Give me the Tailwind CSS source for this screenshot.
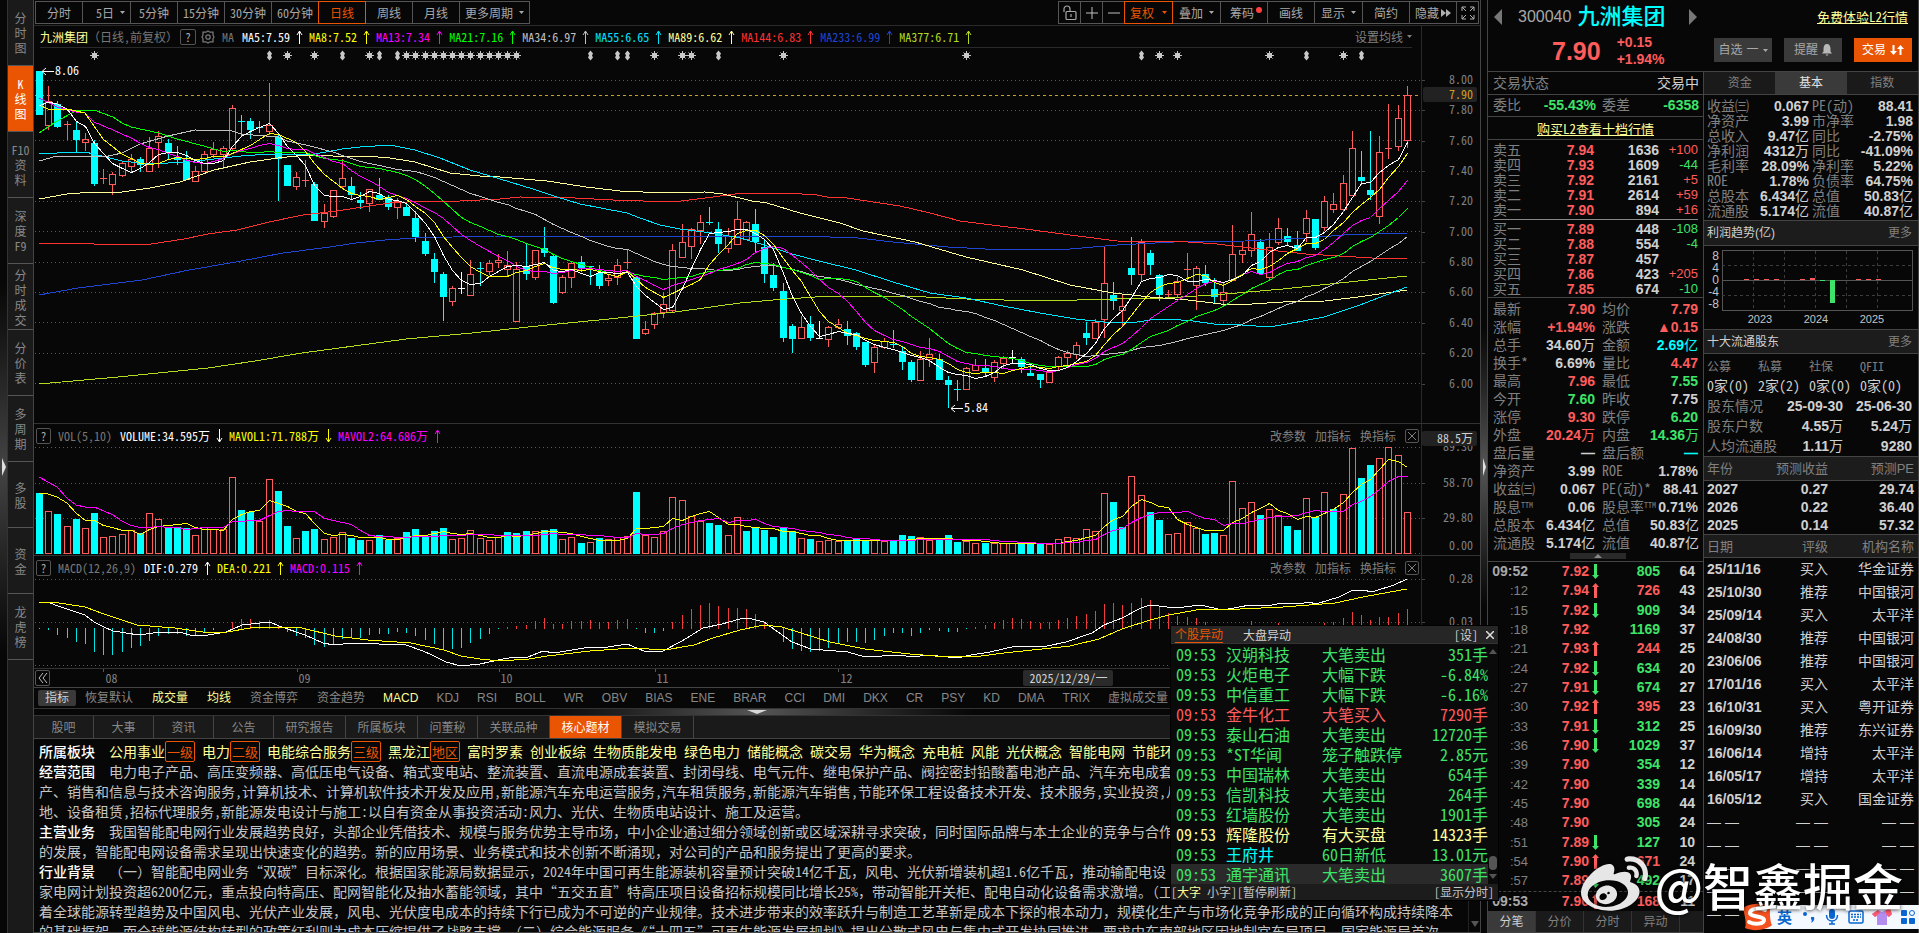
<!DOCTYPE html>
<html lang="zh-CN">
<head>
    <meta charset="UTF-8">
    <meta name="viewport" content="width=device-width, initial-scale=1.0">
    <title>九洲集团 300040 日线</title>
    <script src="https://cdn.jsdelivr.net/npm/@tailwindcss/browser@4"></script>
</head>
<body class="relative flex h-screen overflow-hidden bg-[#070707] text-xs leading-4 text-[#a8a8a8] font-['Noto_Sans_CJK_SC',sans-serif] [font-feature-settings:'hwid']">

    <!-- 左侧导航 -->
    <div class="flex w-2 shrink-0 flex-col justify-center border-r border-[#333] bg-linear-to-b from-[#070707] from-30% via-[#444] to-[#070707] to-70%">
        <svg class="h-5 w-2" viewBox="0 0 8 20"><path d="M2 1l4 9-4 9z" fill="#e0e0e0"/></svg>
    </div>
    <nav id="sideNav" class="flex w-[26px] shrink-0 flex-col border-r border-[#444] bg-[#1a1a1a] text-[#888]"></nav>

    <!-- 图表区 -->
    <main class="flex min-w-0 flex-1 flex-col">
        <div class="flex h-[26px] shrink-0 justify-between border-b border-[#2a2a2a] pt-px pl-0.5">
            <div id="periods" class="flex"></div>
            <div class="flex pr-px">
                <button aria-label="锁定" class="-ml-px flex h-[23px] w-[23px] items-center justify-center border border-[#555]">
                    <svg class="h-4 w-4" viewBox="0 0 16 16" fill="none" stroke="#a8a8a8" stroke-width="1.2"><rect x="4" y="6.5" width="10" height="8" rx="1"/><path d="M2 7V4a3 3 0 0 1 6 0v2.500M9 9v3"/></svg>
                </button>
                <button aria-label="放大" class="-ml-px flex h-[23px] w-[23px] items-center justify-center border border-[#555]">
                    <svg class="h-3 w-3" viewBox="0 0 12 12" stroke="#c0c0c0"><path d="M6 0v12M0 6h12"/></svg>
                </button>
                <button aria-label="缩小" class="-ml-px flex h-[23px] w-[23px] items-center justify-center border border-[#555]">
                    <svg class="h-3 w-3" viewBox="0 0 12 12" stroke="#c0c0c0"><path d="M0 6h12"/></svg>
                </button>
                <button class="z-10 -ml-px flex h-[23px] w-[49px] items-center justify-center gap-2 border border-[#ea5504] text-[#ea5504]">复权<svg class="h-[3px] w-[5px]" viewBox="0 0 5 3" fill="currentColor"><path d="M0 0h5L2.500 3z"/></svg></button>
                <button class="-ml-px flex h-[23px] w-[49px] items-center justify-center gap-1.5 border border-[#555]">叠加<svg class="h-[3px] w-[5px]" viewBox="0 0 5 3" fill="currentColor"><path d="M0 0h5L2.500 3z"/></svg></button>
                <button class="-ml-px flex h-[23px] w-[48px] items-center justify-center border border-[#555] pl-1">筹码<span class="mb-1.5 ml-0.5 h-1.5 w-1.5 rounded-full bg-[#ff4040]"></span></button>
                <button class="-ml-px h-[23px] w-[48px] border border-[#555]">画线</button>
                <button class="-ml-px flex h-[23px] w-[49px] items-center justify-center gap-1.5 border border-[#555]">显示<svg class="h-[3px] w-[5px]" viewBox="0 0 5 3" fill="currentColor"><path d="M0 0h5L2.500 3z"/></svg></button>
                <button class="-ml-px h-[23px] w-[48px] border border-[#555]">简约</button>
                <button class="-ml-px flex h-[23px] w-[48px] items-center justify-center gap-0.5 border border-[#555]">隐藏<svg class="h-2 w-2.5" viewBox="0 0 10 8" fill="#b0b0b0"><path d="M0 0l5 4-5 4zM5 0l5 4-5 4z"/></svg></button>
                <button aria-label="全屏" class="-ml-px flex h-[23px] w-[23px] items-center justify-center border border-[#555]">
                    <svg class="h-3.5 w-3.5" viewBox="0 0 14 14" fill="none" stroke="#b0b0b0"><path d="M1 5V1h4M1 1l4 4M9 1h4v4M13 1L9 5M1 9v4h4M1 13l4-4M13 9v4H9M13 13L9 9"/></svg>
                </button>
            </div>
        </div>

        <!-- K线 -->
        <section class="flex border-b border-[#333]">
            <div class="min-w-0 flex-1">
                <div class="mr-[9px] ml-1.5 flex h-[22px] items-center justify-between border-b border-[#2a2a2a] whitespace-nowrap">
                    <div class="flex items-center">
                        <h2 class="text-[#ffff99]">九洲集团</h2>
                        <span class="text-[#777] [font-feature-settings:normal]">（日线<span class="[font-feature-settings:'hwid']">,</span>前复权）</span>
                        <button class="ml-0.5 h-4 w-4 rounded-xs border border-[#555] leading-3">?</button>
                        <svg class="ml-[5px] h-3.5 w-3.5" viewBox="0 0 14 14" fill="none" stroke="#777" stroke-width="1.3"><path d="M7 1l2 1.200h3v3L13 7l-1 1.800v3H9L7 13l-2-1.200H2v-3L1 7l1-1.800v-3h3z"/><circle cx="7" cy="7" r="2.200"/></svg>
                        <span class="mr-2 ml-[7px] text-[#777]">MA</span>
                        <div id="maLegend" class="flex items-center"></div>
                    </div>
                    <button class="flex items-center gap-1 text-[#808080]">设置均线<svg class="h-[3px] w-[5px]" viewBox="0 0 5 3" fill="currentColor"><path d="M0 0h5L2.500 3z"/></svg></button>
                </div>
                <svg id="kChart" class="block h-[375px] w-full" viewBox="34 48 1387 375" preserveAspectRatio="none"></svg>
            </div>
            <svg id="kAxis" class="block h-[397px] w-[59px] shrink-0 border-l border-[#2a2a2a] text-xs" viewBox="1422 26 58 397"></svg>
        </section>

        <!-- 成交量 -->
        <section class="flex border-b border-[#333]">
            <div class="min-w-0 flex-1">
                <div class="flex h-[23px] items-center justify-between pr-0.5 pl-0.5 whitespace-nowrap">
                    <div class="flex items-center">
                        <button class="mr-[7px] h-4 w-[15px] rounded-xs border border-[#555] leading-3">?</button>
                        <span class="mr-2 text-[#777]">VOL(5,10)</span>
                        <div id="volLegend" class="flex items-center"></div>
                    </div>
                    <div class="flex items-center gap-[9px] text-[#808080]">
                        <button>改参数</button><button>加指标</button><button>换指标</button>
                        <button aria-label="关闭" class="flex h-3.5 w-3.5 items-center justify-center rounded-xs border border-[#555]"><svg class="h-2 w-2" viewBox="0 0 8 8" stroke="#808080"><path d="M0 0l8 8M8 0L0 8"/></svg></button>
                    </div>
                </div>
                <svg id="vChart" class="block h-[108px] w-full" viewBox="34 447 1387 108" preserveAspectRatio="none"></svg>
            </div>
            <svg id="vAxis" class="block h-[131px] w-[59px] shrink-0 border-l border-[#2a2a2a] text-xs" viewBox="1422 424 58 131"></svg>
        </section>

        <!-- MACD -->
        <section class="flex border-b border-[#333]">
            <div class="min-w-0 flex-1">
                <div class="flex h-[23px] items-center justify-between pr-0.5 pl-0.5 whitespace-nowrap">
                    <div class="flex items-center">
                        <button class="mr-[7px] h-4 w-[15px] rounded-xs border border-[#555] leading-3">?</button>
                        <span class="mr-2 text-[#777]">MACD(12,26,9)</span>
                        <div id="macdLegend" class="flex items-center"></div>
                    </div>
                    <div class="flex items-center gap-[9px] text-[#808080]">
                        <button>改参数</button><button>加指标</button><button>换指标</button>
                        <button aria-label="关闭" class="flex h-3.5 w-3.5 items-center justify-center rounded-xs border border-[#555]"><svg class="h-2 w-2" viewBox="0 0 8 8" stroke="#808080"><path d="M0 0l8 8M8 0L0 8"/></svg></button>
                    </div>
                </div>
                <svg id="mChart" class="block h-[89px] w-full" viewBox="34 579 1387 89" preserveAspectRatio="none"></svg>
            </div>
            <svg id="mAxis" class="block h-[112px] w-[59px] shrink-0 border-l border-[#2a2a2a] text-xs" viewBox="1422 556 58 112"></svg>
        </section>

        <!-- 日期轴 -->
        <div class="flex h-[19px] shrink-0 border-b border-[#444]">
            <div id="dates" class="relative flex-1 text-[#808080]">
                <button aria-label="向前" class="mt-px ml-px flex h-4 w-[15px] items-center justify-center rounded-xs border border-[#555]">
                    <svg class="h-2.5 w-2.5" viewBox="0 0 10 10" fill="none" stroke="#c0c0c0"><path d="M5 0L1 5l4 5M9 0L5 5l4 5"/></svg>
                </button>
            </div>
            <div class="w-[59px]"></div>
        </div>

        <!-- 指标选择 -->
        <div class="flex h-[21px] shrink-0 items-center gap-[18px] overflow-hidden border-b border-[#333] pl-1 whitespace-nowrap text-[#888] font-['Liberation_Sans','Noto_Sans_CJK_SC',sans-serif]">
            <div id="groups" class="flex items-center gap-[19px]"></div>
            <div id="indicators" class="flex items-center gap-[18px]"></div>
        </div>
        <div class="flex h-[7px] shrink-0 items-center justify-center border-b border-[#333] bg-linear-to-r from-[#070707] from-35% via-[#555] via-50% to-[#070707] to-65%">
            <svg class="h-1 w-5" viewBox="0 0 20 4"><path d="M0 0h20l-10 4z" fill="#d8d8d8"/></svg>
        </div>

        <!-- 资料页签 -->
        <div id="infoTabs" class="flex h-[23px] shrink-0 border-b border-[#444] bg-[#1a1a1a] text-[#888]"></div>
        <div class="flex min-h-0 flex-1 overflow-hidden border-b border-[#444]">
            <article id="info" class="min-w-0 flex-1 overflow-hidden pt-0.5 pl-[5px] text-sm leading-5 whitespace-nowrap text-[#c4c4c4] [font-feature-settings:normal]"></article>
            <div class="flex w-3 flex-col items-center justify-end border-l border-[#222]">
                <svg class="mb-1 h-2 w-2" viewBox="0 0 8 8"><path d="M0 1h8L4 7z" fill="#555"/></svg>
            </div>
        </div>
    </main>

    <!-- 分隔条 -->
    <div class="flex w-[7px] shrink-0 flex-col justify-center border-l border-[#444] bg-linear-to-b from-[#070707] from-35% via-[#555] to-[#070707] to-65%">
        <svg class="h-5 w-[7px]" viewBox="0 0 7 20"><path d="M2 1l3 9-3 9z" fill="#e0e0e0"/></svg>
    </div>

    <!-- 右侧行情 -->
    <aside class="flex w-[432px] shrink-0 flex-col border-x border-[#444] font-['Liberation_Sans','Noto_Sans_CJK_SC',sans-serif]">
        <header class="flex h-[72px] shrink-0 justify-between border-b border-[#444] pr-1.5">
            <div>
                <div class="flex h-[34px] items-center pl-1.5">
                    <button aria-label="上一只" class="mr-4"><svg class="h-4 w-2" viewBox="0 0 8 16"><path d="M8 0v16L0 8z" fill="#777"/></svg></button>
                    <span class="text-base">300040</span>
                    <h1 class="ml-1.5 text-[22px] leading-7 font-medium text-[#00ffff]">九洲集团</h1>
                    <button aria-label="下一只" class="ml-6"><svg class="h-4 w-2" viewBox="0 0 8 16"><path d="M0 0v16l8-8z" fill="#777"/></svg></button>
                </div>
                <div class="flex items-center pl-16 font-bold text-[#ff5c5c]">
                    <span class="text-[25px] leading-7">7.90</span>
                    <div class="ml-4 text-sm leading-[17px]">+0.15<br>+1.94%</div>
                </div>
            </div>
            <div class="flex flex-col items-end">
                <a href="#" class="mt-2 mr-1 text-[13px] leading-[18px] text-[#ffff99] underline font-['Noto_Sans_CJK_SC',sans-serif]">免费体验L2行情</a>
                <div class="mt-3 flex gap-3 text-xs">
                    <button class="flex h-6 w-[58px] items-center justify-center gap-1 bg-[#3a3a3a]">自选<span>一</span><svg class="h-[3px] w-[5px]" viewBox="0 0 5 3" fill="currentColor"><path d="M0 0h5L2.500 3z"/></svg></button>
                    <button class="flex h-6 w-[58px] items-center justify-center gap-1 bg-[#3a3a3a]">提醒<svg class="h-3 w-2.5" viewBox="0 0 10 12" fill="#b8b8b8"><path d="M5 0c2.500 0 3.500 2 3.500 5v2.500L10 9.500H0l1.500-2V5C1.500 2 2.500 0 5 0zM3.500 10.500h3L5 12z"/></svg></button>
                    <button class="flex h-6 w-[58px] items-center justify-center gap-1 bg-[#ea5504] text-white">交易<svg class="h-3 w-3.5" viewBox="0 0 14 12" fill="#fff"><path d="M2.500 1h2v6H7l-3.500 4L0 7h2.500zM9.500 11h2V5H14l-3.500-4L7 5h2.500z"/></svg></button>
                </div>
            </div>
        </header>

        <div class="flex min-h-0 flex-1">
            <!-- 五档 / 明细 -->
            <div class="flex w-[216px] shrink-0 flex-col border-r border-[#444] text-sm leading-[15px] text-[#808080]">
                <div class="flex h-[23px] shrink-0 items-center justify-between border-b border-[#444] pr-1 pl-[5px]"><span>交易状态</span><span class="text-[#d0d0d0]">交易中</span></div>
                <div class="flex h-[22px] shrink-0 items-center border-b border-[#444] pr-1 pl-[5px]">
                    <span class="w-9">委比</span><span class="w-[67px] text-right font-bold text-[#3ee468]">-55.43%</span>
                    <span class="ml-1.5">委差</span><span class="flex-1 text-right font-bold text-[#3ee468]">-6358</span>
                </div>
                <a href="#" class="flex h-[23px] shrink-0 items-center justify-center border-b border-[#444] text-[13px] text-[#ffff99] underline font-['Noto_Sans_CJK_SC',sans-serif]">购买L2查看十档行情</a>
                <div class="shrink-0 border-b border-[#444] pt-0.5 pb-px pl-[5px] leading-3">
                    <table class="w-[205px]"><tbody id="asks"></tbody></table>
                    <hr class="mt-0.5 mb-px w-[205px] border-[#888]">
                    <table class="w-[205px]"><tbody id="bids"></tbody></table>
                </div>
                <div class="shrink-0 border-b border-[#444] pt-0.5 pb-0.5 pl-[5px]">
                    <table class="w-[205px] table-fixed whitespace-nowrap"><tbody id="quote"></tbody></table>
                    <button aria-label="收起" class="mx-auto mt-px flex h-1.5 w-14 items-center justify-center bg-[#2a2a2a]"><svg class="h-1 w-2" viewBox="0 0 8 4"><path d="M0 4l4-4 4 4z" fill="#888"/></svg></button>
                </div>
                <div id="ticks" class="flex min-h-0 flex-1 flex-col"></div>
                <div class="flex h-[22px] shrink-0 border-b border-[#444] bg-[#1a1a1a] text-xs">
                    <button class="w-12 border-r border-[#333] bg-[#3a3a3a] text-[#d0d0d0]">分笔</button>
                    <button class="w-12 border-r border-[#333]">分价</button>
                    <button class="w-12 border-r border-[#333]">分时</button>
                    <button class="w-12 border-r border-[#333]">异动</button>
                </div>
            </div>

            <!-- 基本资料 -->
            <div class="flex min-w-0 flex-1 flex-col text-sm leading-[15px] text-[#808080]">
                <div class="flex h-[23px] shrink-0 border-b border-[#444] bg-[#1a1a1a] text-xs">
                    <button class="flex-1">资金</button>
                    <button class="flex-1 bg-[#3a3a3a] text-[#e0e0e0]">基本</button>
                    <button class="flex-1">指数</button>
                </div>
                <div class="shrink-0 border-b border-[#444] pt-[3px] pb-0.5 pl-[3px] leading-3">
                    <table class="w-[206px] table-fixed whitespace-nowrap"><tbody id="basics"></tbody></table>
                </div>
                <div class="flex h-[25px] shrink-0 items-center justify-between border-b border-[#444] bg-[#1c1c1c] px-[3px] pr-1.5 text-xs"><h2 class="text-[#d0d0d0]">利润趋势(亿)</h2><a href="#">更多</a></div>
                <svg id="profit" class="block h-[83px] w-full shrink-0 text-xs" viewBox="1704 246 214 83"></svg>
                <div class="flex h-[25px] shrink-0 items-center justify-between border-y border-[#444] bg-[#1c1c1c] px-[3px] pr-1.5 text-xs"><h2 class="text-[#d0d0d0]">十大流通股东</h2><a href="#">更多</a></div>
                <div class="shrink-0 border-b border-[#444] pt-0.5 pl-[3px] font-['Noto_Sans_CJK_SC',sans-serif]">
                    <div class="grid h-5 grid-cols-[51px_51px_51px_51px] text-xs leading-5"><span>公募</span><span>私募</span><span>社保</span><span>QFII</span></div>
                    <div class="grid h-5 grid-cols-[51px_51px_51px_51px] leading-[18px] text-[#d0d0d0]"><span>0家(0)</span><span>2家(2)</span><span>0家(0)</span><span>0家(0)</span></div>
                    <table class="w-[205px] leading-4 font-['Liberation_Sans','Noto_Sans_CJK_SC',sans-serif]"><tbody id="holders"></tbody></table>
                </div>
                <table class="w-full table-fixed">
                    <thead class="border-b border-[#444] bg-[#1c1c1c] text-[13px]"><tr class="h-[23px]"><th class="w-[54px] pl-[3px] text-left font-normal">年份</th><th class="text-right font-normal">预测收益</th><th class="w-[90px] pr-1 text-right font-normal">预测PE</th></tr></thead>
                    <tbody id="forecast" class="font-bold text-[#d0d0d0]"></tbody>
                </table>
                <table class="w-full table-fixed">
                    <thead class="border-y border-[#444] bg-[#1c1c1c] text-[13px]"><tr class="h-[23px]"><th class="w-[70px] pl-[3px] text-left font-normal">日期</th><th class="text-right font-normal">评级</th><th class="w-[90px] pr-1 text-right font-normal">机构名称</th></tr></thead>
                    <tbody id="ratings" class="text-[#d0d0d0]"></tbody>
                </table>
            </div>
        </div>
    </aside>

    <!-- 异动浮窗 -->
    <div class="absolute right-[420px] bottom-8 z-20 w-[329px] border border-black bg-[#0a0a0a]">
        <div class="flex h-[18px] items-center border-b border-[#333] bg-[#262626] px-1 text-[#d0d0d0]">
            <button class="border-b border-[#ea5504] text-[#ea5504]">个股异动</button>
            <button class="ml-5">大盘异动</button>
            <button class="ml-auto">[设]</button>
            <button aria-label="关闭" class="ml-2"><svg class="h-2 w-2" viewBox="0 0 8 8" stroke="#e0e0e0" stroke-width="1.500"><path d="M0 0l8 8M8 0L0 8"/></svg></button>
        </div>
        <div class="flex">
            <table class="flex-1 text-base leading-5 whitespace-nowrap"><tbody id="alerts"></tbody></table>
            <div class="flex w-2.5 flex-col items-center justify-between py-1">
                <svg class="h-1.5 w-2" viewBox="0 0 8 6"><path d="M0 6l4-5 4 5z" fill="#555"/></svg>
                <div class="mt-auto mb-1 h-3.5 w-2 rounded-full bg-[#555]"></div>
                <svg class="h-1.5 w-2" viewBox="0 0 8 6"><path d="M0 0l4 5 4-5z" fill="#555"/></svg>
            </div>
        </div>
        <div class="flex h-4 items-center justify-between bg-[#1c1c1c] text-[#c4c4c4]">
            <div><button>[<span class="text-[#ffff99]">大字</span></button> <button>小字]</button><button>[暂停刷新]</button></div>
            <button class="mr-1">[显示分时]</button>
        </div>
    </div>

    <!-- 输入法 -->
    <div class="absolute right-0 bottom-1 z-20 flex h-6 w-[166px] items-center justify-between rounded-l-sm bg-[#f4f9ff] pr-1 pl-6">
        <svg class="absolute -left-3 h-7 w-8" viewBox="0 0 32 28"><path d="M2 5C8 0 22 0 30 2c-2 3-1 18 1 20-6 5-18 7-27 3C6 20 3 10 2 5z" fill="#f4511e"/><path d="M24 7C17 4 9 6 9 10s14 3 14 7-9 5-15 2" fill="none" stroke="#fff" stroke-width="4" stroke-linecap="round"/></svg>
        <span class="text-[15px] leading-5 font-bold text-[#0a66d0]">英</span>
        <svg class="h-4 w-4" viewBox="0 0 16 16" fill="#0a66d0"><circle cx="4" cy="5" r="2"/><path d="M10 8h3c1 3-1 5-3 6 1-2 1-3 0-4z"/></svg>
        <svg class="h-4 w-3.5" viewBox="0 0 14 16"><rect x="4" y="0" width="6" height="10" rx="3" fill="#0a66d0"/><path d="M1.500 6c0 8 11 8 11 0M7 12v3M4 15h6" fill="none" stroke="#0a66d0" stroke-width="1.500"/></svg>
        <svg class="h-3.5 w-4" viewBox="0 0 16 14"><rect x="1" y="1" width="14" height="12" rx="1.500" fill="none" stroke="#0a66d0" stroke-width="1.500"/><path d="M3 4.500h10M3 7h10M5 10h6" stroke="#0a66d0" stroke-width="1.500" stroke-dasharray="2 1"/></svg>
        <svg class="h-4 w-5" viewBox="0 0 20 16"><path d="M0 5l6-4 4 2 4-2 6 4-3 3-2-1v9H5V7L3 8z" fill="#b38cf0"/><path d="M0 5l6-4 2 3-5 4zM14 1l4-2 2 6-3 3-3-3z" fill="#ff5a70"/></svg>
        <svg class="h-3.5 w-3.5" viewBox="0 0 14 14" fill="#0a66d0"><rect width="6" height="6" rx="1"/><rect y="8" width="6" height="6" rx="1"/><rect x="8" y="8" width="6" height="6" rx="1"/><circle cx="11" cy="3" r="2.500" fill="none" stroke="#0a66d0"/></svg>
    </div>

    <!-- 水印 -->
    <div class="absolute right-4 bottom-4 z-30 flex items-center gap-1.5 text-[50px] leading-[60px] font-medium whitespace-nowrap text-white drop-shadow-[0_0_2px_#000] [font-feature-settings:normal]">
        <svg class="h-[67px] w-[67px] opacity-90" viewBox="0 0 24 24" fill="#fff"><path d="M10.098 20.323c-3.977.391-7.414-1.406-7.672-4.020-.259-2.609 2.759-5.047 6.740-5.441 3.979-.394 7.413 1.404 7.671 4.018.259 2.600-2.759 5.049-6.737 5.439l-.002.004zM9.050 17.219c-.384.616-1.208.884-1.829.602-.612-.279-.793-.991-.406-1.593.379-.595 1.176-.861 1.793-.601.622.263.820.972.442 1.592zm1.270-1.627c-.141.237-.449.353-.689.253-.236-.090-.313-.361-.177-.586.138-.227.436-.346.672-.240.239.090.315.360.180.601l.014-.028zm.176-2.719c-1.893-.493-4.033.450-4.857 2.118-.836 1.704-.026 3.591 1.886 4.210 1.983.640 4.318-.341 5.132-2.179.8-1.793-.201-3.642-2.161-4.149zm7.563-1.224c-.346-.105-.570-.180-.405-.615.375-.977.420-1.804 0-2.404-.781-1.112-2.915-1.053-5.364-.030 0 0-.766.331-.571-.271.376-1.217.315-2.224-.270-2.809-1.338-1.337-4.869.045-7.888 3.080C1.309 10.870 0 13.273 0 15.348c0 3.981 5.099 6.395 10.086 6.395 6.536 0 10.888-3.801 10.888-6.820 0-1.822-1.547-2.854-2.915-3.284v.010zm1.908-5.092c-.766-.856-1.908-1.187-2.960-.962-.436.090-.706.511-.616.932.090.420.511.691.932.602.511-.105 1.067.044 1.442.465.376.421.466.977.316 1.473-.136.406.089.856.510.992.405.119.857-.105.992-.512.330-1.021.120-2.178-.646-3.035l.030.045zm2.418-2.195c-1.576-1.757-3.905-2.419-6.054-1.968-.496.104-.812.587-.706 1.081.104.496.586.813 1.082.707 1.532-.331 3.185.150 4.296 1.383 1.112 1.246 1.429 2.943.947 4.416-.165.480.106 1.007.586 1.157.479.165.991-.104 1.157-.586.675-2.088.241-4.478-1.338-6.235l.030.045z"/></svg>
        <span>@智鑫掘金</span>
    </div>

    <script>
        const $ = id => document.getElementById(id);
        const RED = "#ff5c5c", CYAN = "#00ffff";

        // ---------- 导航 ----------
        $("sideNav").innerHTML = ["分,时,图", "K,线,图", "F10,资,料", "深,度,F9", "分,时,成,交", "分,价,表", "多,周,期", "多,股", "资,金", "龙,虎,榜"].map((t, i) =>
            `<button class="flex h-[66px] shrink-0 flex-col items-center justify-center border-b border-[#555] leading-[15px] ${i === 1 ? "bg-[#ea5504] text-white" : ""}">${t.split(",").map(c => `<span>${c}</span>`).join("")}</button>`).join("");

        const arrow = '<svg class="h-[3px] w-[5px]" viewBox="0 0 5 3" fill="currentColor"><path d="M0 0h5L2.500 3z"/></svg>';
        $("periods").innerHTML = ["分时", "5日" + arrow, "5分钟", "15分钟", "30分钟", "60分钟", "日线", "周线", "月线"].map((t, i) =>
            `<button class="-ml-px flex h-[23px] items-center justify-center gap-1.5 border ${i === 1 ? "w-[49px] pl-2" : "w-12"} ${i === 6 ? "z-10 border-[#ea5504] text-[#ea5504]" : "border-[#555]"}">${t}</button>`).join("") +
            `<button class="-ml-px flex h-[23px] w-[71px] items-center justify-center gap-1.5 border border-[#555]">更多周期${arrow}</button>`;

        $("groups").innerHTML = '<button class="-mr-2.5 h-4 w-[38px] rounded-xs bg-[#3a3a3a] text-[#d0d0d0]">指标</button>' +
            ["恢复默认", "成交量", "均线", "资金博弈", "资金趋势"].map(t => `<button class="${["成交量", "均线"].includes(t) ? "text-[#ffff99]" : ""}">${t}</button>`).join("");
        $("indicators").innerHTML = ["MACD", "KDJ", "RSI", "BOLL", "WR", "OBV", "BIAS", "ENE", "BRAR", "CCI", "DMI", "DKX", "CR", "PSY", "KD", "DMA", "TRIX", "虚拟成交量"].map(t =>
            `<button class="${t === "MACD" ? "text-[#ffff99]" : ""}">${t}</button>`).join("");

        $("infoTabs").innerHTML = ["股吧", "大事", "资讯", "公告", "研究报告", "所属板块", "问董秘", "关联品种", "核心题材", "模拟交易"].map(t =>
            `<button class="border-r border-[#444] ${t.length > 3 ? "w-[72px]" : "w-[60px]"} ${t === "核心题材" ? "bg-[#ea5504] text-white" : ""}">${t}</button>`).join("");

        // ---------- 图例 ----------
        function legend(id, items) {
            $(id).innerHTML = items.map(([t, c, down]) =>
                `<span class="flex items-center" style="color:${c}">${t}<svg class="mx-1.5 h-3.5 w-[7px]" viewBox="0 0 7 14" fill="none" stroke="currentColor"><path d="${down ? "M3.500 0v13M1 9l2.500 4L6 9" : "M3.500 14V1M1 5l2.500-4L6 5"}"/></svg></span>`).join("");
        }
        legend("maLegend", [["MA5:7.59", "#fff"], ["MA8:7.52", "#ff0"], ["MA13:7.34", "#f0f"], ["MA21:7.16", "#0f0"], ["MA34:6.97", "#c0c0c0"], ["MA55:6.65", "#00e5ff"], ["MA89:6.62", "#ffff99"], ["MA144:6.83", "#ff3232"], ["MA233:6.99", "#1e46d2"], ["MA377:6.71", "#b4dc1e"]]);
        legend("volLegend", [["VOLUME:34.595万", "#fff", 1], ["MAVOL1:71.788万", "#ff0", 1], ["MAVOL2:64.686万", "#f0f"]]);
        legend("macdLegend", [["DIF:0.279", "#fff"], ["DEA:0.221", "#ff0"], ["MACD:0.115", "#f0f"]]);

        // ---------- K线数据: 类型 高 体顶 体底 低 ----------
        const bars = `c 71 71 115 115|r 86 101 126 130|c 101 104 127 128|r 121 124 125 140|c 122 130 140 152|r 133 139 143 151|c 140 143 184 186|r 169 178 179 184|r 172 174 185 195|r 161 163 176 177
r 154 159 167 173|c 157 159 165 172|r 137 148 172 172|r 131 136 143 168|c 139 143 152 159|c 146 157 160 165|c 151 160 180 180|r 166 171 182 182|r 151 154 172 172|r 142 149 155 158
r 146 148 155 169|r 105 108 149 151|c 115 121 122 136|c 118 121 130 139|c 121 127 128 133|r 83 125 132 135|c 135 137 159 201|c 165 165 186 186|r 172 177 187 190|r 160 180 181 187
c 182 184 221 221|r 204 213 222 228|r 190 190 217 218|r 159 178 187 188|c 177 186 195 200|c 192 200 203 209|r 189 189 204 212|c 178 195 200 200|c 195 198 207 210|r 198 201 208 219
c 204 207 216 216|c 211 218 237 242|c 233 241 254 256|c 253 259 272 283|c 272 274 297 321|r 286 288 302 306|w 272 288 289 294|r 260 274 296 296|c 262 268 269 286|r 260 263 272 275
r 254 260 263 268|r 251 265 270 277|r 262 269 322 322|c 244 266 274 280|r 250 250 278 280|c 227 248 253 257|c 254 256 303 304|r 275 277 293 294|r 261 263 278 288|c 256 262 268 272
c 266 266 267 285|c 265 273 286 289|r 275 278 281 286|r 259 265 278 285|r 250 262 264 269|c 276 277 339 339|r 321 329 334 335|r 312 313 325 329|r 292 304 313 318|r 244 250 311 312
r 224 242 258 258|r 228 229 247 259|r 215 222 231 244|c 207 222 224 225|c 222 229 244 253|r 228 236 249 253|r 201 219 245 245|r 221 222 240 240|c 209 224 242 252|c 239 247 274 283
c 263 275 288 291|c 283 291 338 342|c 324 326 339 353|r 316 327 339 339|c 316 324 338 341|w 321 338 339 339|r 326 327 340 347|r 319 324 328 329|c 321 329 336 345|c 332 333 347 350
c 342 342 365 367|r 345 347 363 373|r 338 341 348 349|c 330 344 345 348|c 347 351 362 370|c 360 362 380 382|r 351 359 381 381|r 338 354 360 367|c 354 359 380 380|c 376 380 385 408
c 380 389 390 401|r 367 368 390 390|r 359 365 371 371|c 359 368 373 377|r 360 362 378 382|r 356 358 364 368|w 350 357 358 364|c 357 359 367 373|c 365 373 376 376|c 374 374 380 388
r 370 371 383 383|r 356 357 367 371|r 350 353 358 366|r 342 345 355 359|c 322 333 338 345|r 319 322 339 339|r 247 283 320 338|c 282 295 301 310|r 295 306 311 326|c 237 268 275 285
r 239 242 275 281|c 250 253 265 275|c 274 275 295 301|r 290 294 296 297|r 277 281 295 298|r 253 269 270 281|r 266 268 286 310|c 265 274 283 286|c 278 289 297 303|r 282 292 301 306
r 225 254 281 281|r 242 250 255 263|r 212 234 251 257|c 239 242 274 275|r 233 247 278 280|r 218 228 243 245|c 228 236 242 245|c 231 245 251 251|r 210 218 234 242|c 219 219 248 250
r 196 201 228 231|r 193 204 210 213|r 175 183 210 212|r 131 148 196 196|c 151 177 181 185|c 131 190 195 200|r 136 152 217 224|r 104 148 149 159|r 105 118 147 151|r 86 95 141 148`
            .split(/[|\n]/).map(s => { const [t, ...v] = s.trim().split(" "); return [t, ...v.map(Number)]; });

        // 负数为阴量
        const vols = [-60,42,-39,27,-34,25,-40,16,17,19,23,-20,40,34,-25,-26,-25,18,26,24,24,76,-43,-41,32,74,-62,-27,15,-22,-24,14,16,21,-15,-13,13,-18,-13,15,-21,-24,-17,-22,-25,14,15,23,15,13,
            16,-21,-20,-22,22,-23,-24,14,16,-10,11,-15,14,16,17,-61,18,16,22,56,53,37,32,-30,-28,18,36,-22,-26,-23,-16,-25,-22,15,-14,12,13,12,-12,-14,-12,13,12,-12,-18,-17,16,13,-13,-18,
            -11,12,10,-10,10,10,10,-10,-9,-10,9,14,16,15,24,22,60,-51,-26,77,58,-41,-33,19,20,31,25,-19,-20,18,72,45,51,-38,44,38,-27,-23,55,-36,61,-44,59,105,-75,-88,95,106,98,41];

        const macd = [-1,-2,-7,-10,-14,-16,-24,-27,-27,-24,-20,-18,-13,-8,-6,-6,-8,-8,-4,-2,0,7,10,10,8,9,3,-4,-8,-10,-17,-19,-16,-11,-10,-10,-7,-6,-6,-4,-5,-8,-12,-16,-21,-21,-20,-15,-11,-6,
            -1,2,3,4,8,11,5,5,8,8,9,7,7,9,10,-1,-5,-5,-3,7,14,20,24,26,23,21,21,20,15,6,-2,-14,-21,-23,-24,-23,-20,-16,-14,-14,-15,-12,-8,-5,-5,-8,-5,-2,-3,-4,
            -4,-1,2,4,6,9,11,10,8,6,7,9,11,13,15,18,25,26,24,26,31,29,22,16,13,12,11,7,3,1,3,4,8,4,3,6,4,3,2,4,6,7,11,17,14,9,12,12,16,20];

        const X = i => Math.round(39 + i * 9.18) + 0.5;
        const line = (pts, c) => `<polyline points="${pts}" fill="none" stroke="${c}" shape-rendering="crispEdges"/>`;
        const dotted = y => `<path d="M35 ${y}.5H1420" stroke="#5a5a5a" stroke-dasharray="1 3" shape-rendering="crispEdges"/>`;

        // 均线: head 为窗口未满时的已知点
        function average(values, n, head) {
            let s = head;
            for (let i = n - 1; i < values.length; i++) {
                const m = values.slice(i - n + 1, i + 1).reduce((a, b) => a + b) / n;
                s += ` ${X(i)},${Math.round(m) + 0.5}`;
            }
            return s;
        }

        let k = [80, 110, 140, 171, 201, 231, 262, 292, 322, 353, 383].map(dotted).join("");
        k += '<path d="M35 95.500H1420" stroke="#c8a01e" stroke-dasharray="3 3" shape-rendering="crispEdges"/>';
        bars.forEach(([t, hi, top, bot, lo], i) => {
            const x = X(i), c = t === "r" ? RED : t === "c" ? CYAN : "#fff";
            k += `<path d="M${x} ${hi}V${top}M${x} ${bot}V${lo}" stroke="${c}" shape-rendering="crispEdges"/>`;
            if (bot - top < 3) k += `<path d="M${x - 3.5} ${top + 0.5}h7M${x} ${hi}V${lo}" stroke="${c}" shape-rendering="crispEdges"/>`;
            else k += `<rect x="${x - 3}" y="${top + 0.5}" width="6" height="${bot - top - 1}" stroke="${c}" fill="${t === "c" ? c : "none"}" shape-rendering="crispEdges"/>`;
        });
        const close = bars.map(b => b[0] === "c" ? b[3] : b[2]);
        k += line("39,384 118,377 208,368 255,361 302,353 354,346 406,339 472,333 547,325 609,319 675,312 740,303 773,300 815,297 905,296 966,299 1042,301 1113,299 1165,298 1214,295 1283,289 1358,281 1407,276", "#b4dc1e");
        k += line("39,295 78,288 142,280 189,270 236,262 283,253 330,247 356,243 385,240 415,238 453,237 495,236 740,236 801,236 858,238 893,242 948,247 985,249 1070,249 1117,245 1174,242 1245,241 1306,238 1344,235 1407,233", "#1e46d2");
        k += line("39,243 78,243 94,244 125,245 151,244 184,239 208,234 237,230 269,222 303,215 337,211 363,207 390,203 407,202 460,201 500,199 520,197 575,198 613,200 673,202 713,197 743,193 787,193 817,195 827,197 847,198 873,202 900,206 930,213 960,221 1000,226 1033,230 1070,235 1117,241 1188,242 1217,244 1259,249 1306,254 1339,256 1372,258 1407,258", "#ff3232");
        k += line("39,199 67,194 94,192 122,192 150,188 180,182 214,170 250,162 278,158 306,155 333,156 365,156 390,158 415,162 450,173 480,176 500,177 547,181 586,187 620,191 665,193 705,192 723,194 752,201 767,203 800,213 840,223 863,231 915,242 966,257 1023,270 1070,285 1113,293 1150,297 1188,300 1221,304 1252,304 1283,302 1325,301 1358,297 1407,290", "#ffff99");
        k += line("39,154 57,153 85,152 94,154 122,161 150,164 186,162 214,159 241,156 269,154 315,154 342,149 360,147 390,145 415,150 440,158 470,170 500,179 533,189 557,197 580,204 627,213 640,218 660,225 680,229 712,233 740,238 764,245 792,254 819,261 856,270 893,282 930,293 966,298 1003,306 1040,313 1076,319 1104,322 1131,323 1150,320 1168,319 1193,321 1214,324 1242,325 1269,327 1287,324 1324,317 1360,305 1386,295 1407,287", "#00e5ff");
        k += line(average(close, 34, "39,161 57,156 85,156 104,157 122,153 140,144 168,136 195,130 232,131 241,134 278,137 287,141 306,145 333,152"), "#c0c0c0");
        k += line(average(close, 21, "39,133 57,121 76,111 94,110 113,117 122,123 131,127 159,133 177,139 204,146 214,149"), "#0f0");
        k += line(average(close, 13, "39,98 57,107 76,112 85,113 94,122 113,130 131,138 140,143"), "#f0f");
        k += line(average(close, 8, "39,105 48,109 57,109 67,109 76,111 85,113 94,126"), "#ff0");
        k += line(average(close, 5, "39,106 48,102 57,104 67,109"), "#fff");

        // 事件标记
        [6, 27, 30, 36, 40, 41, 42, 43, 44, 45, 46, 47, 48, 49, 50, 51, 52, 67, 70, 71, 81, 101, 122, 124, 134, 142].forEach(i =>
            k += `<path d="M${X(i) - 4.5} 55.500h9M${X(i)} 51v9M${X(i) - 3} 52.500l6 6M${X(i) + 3} 52.500l-6 6" stroke="#c8c8c8"/><rect x="${X(i) - 2.5}" y="53" width="5" height="5" fill="#c8c8c8"/>`);
        [25, 33, 37, 39, 60, 63, 64, 74, 120, 138, 144].forEach(i =>
            k += `<path d="M${X(i)} 50.500l2.500 3-1 2 1 2-2.500 3-2.500-3 1-2-1-2z" fill="#c8c8c8"/>`);
        k += '<path d="M42 71.500h12M46 68l-4 3.500 4 3.500" fill="none" stroke="#fff"/><text x="55" y="75" fill="#fff" font-size="12">8.06</text>';
        k += '<path d="M951 408.500h12M955 405l-4 3.500 4 3.500" fill="none" stroke="#fff"/><text x="964" y="412" fill="#fff" font-size="12">5.84</text>';
        $("kChart").innerHTML = k;

        // 成交量
        let v = [447, 483, 518, 553].map(dotted).join("");
        vols.forEach((h, i) => {
            const n = Math.abs(h);
            v += `<rect x="${X(i) - 3}" y="${553.5 - n}" width="6" height="${n}" stroke="${h < 0 ? CYAN : RED}" fill="${h < 0 ? CYAN : "#070707"}" shape-rendering="crispEdges"/>`;
        });
        const volY = vols.map(h => 553 - Math.abs(h));
        v += line(average(volY, 5, "39,493 48,494 57,497 67,503"), "#ff0");
        v += line(average(volY, 10, "39,477 48,482 57,487 67,498 76,505 85,507 94,507 104,511 113,515"), "#f0f");
        $("vChart").innerHTML = v;

        // MACD
        let m = [579, 622, 665].map(dotted).join("");
        macd.forEach((h, i) => {
            if (h) m += `<path d="M${X(i)} ${h > 0 ? 629 : 628}v${-h}" stroke="${h > 0 ? "#f03c3c" : "#00e5e5"}" shape-rendering="crispEdges"/>`;
        });
        m += line("39,602 50,603 58,606 85,615 94,622 104,627 113,631 139,635 160,632 179,632 194,636 208,635 226,632 242,625 260,623 270,622 279,626 305,635 323,643 334,645 352,643 406,645 423,651 432,655 446,662 461,666 480,664 498,660 514,657 528,657 543,651 554,653 590,647 602,648 627,644 644,651 663,651 682,641 703,628 722,624 740,619 748,618 764,622 778,632 792,642 811,649 848,652 865,657 900,655 912,657 929,655 957,658 971,655 990,652 1016,646 1047,646 1066,642 1092,633 1104,625 1122,618 1141,608 1150,605 1176,608 1200,605 1223,610 1250,605 1266,606 1283,603 1299,604 1309,602 1316,604 1339,597 1351,591 1363,590 1372,592 1394,585 1407,579", "#fff");
        m += line("39,602 59,603 85,607 104,614 137,625 175,628 203,632 227,632 250,628 278,627 302,628 335,636 368,640 411,643 444,650 461,656 480,659 500,661 529,659 547,656 590,651 632,648 665,650 694,645 713,638 740,630 764,625 782,627 801,633 830,642 865,649 910,654 948,657 981,656 1004,653 1042,649 1070,646 1099,639 1122,629 1150,620 1169,615 1202,609 1240,609 1283,607 1335,603 1363,597 1407,589", "#ff0");
        $("mChart").innerHTML = m;

        // 坐标轴
        const label = (y, t, c = "#808080") => `<text x="1473" y="${y + 4}" text-anchor="end" fill="${c}">${t}</text>`;
        const mark = y => `<path d="M1422 ${y}.5h3" stroke="#444"/>`;
        $("kAxis").innerHTML = ["8.00", "7.80", "7.60", "7.40", "7.20", "7.00", "6.80", "6.60", "6.40", "6.20", "6.00"].map((t, i) => label(Math.round(80 + i * 30.35), t) + mark(Math.round(80 + i * 30.35))).join("") +
            '<rect x="1423" y="87" width="54" height="15" rx="2" fill="#222"/>' + label(95, "7.90", "#d2a01e");
        $("vAxis").innerHTML = label(447, "89.30") + label(483, "58.70") + label(518, "29.80") + label(546, "0.00") + [483, 518].map(mark).join("") +
            '<rect x="1422" y="431" width="55" height="15" rx="2" fill="#222"/>' + label(439, "88.5万", "#d0d0d0");
        $("mAxis").innerHTML = label(579, "0.28") + label(622, "0.03") + mark(579) + mark(622);

        const pct = i => ((X(i) - 34) / 1387 * 100).toFixed(2);
        $("dates").insertAdjacentHTML("beforeend", [["08", 7], ["09", 28], ["10", 50], ["11", 67], ["12", 87]].map(([t, i]) =>
            `<span class="absolute top-0 h-[3px] border-l border-[#555]" style="left:${pct(i)}%"></span><span class="absolute top-px pl-0.5" style="left:${pct(i)}%">${t}</span>`).join("") +
            `<span class="absolute top-px h-4 w-[90px] rounded-xs bg-[#2a2a2a] text-center text-[#d0d0d0]" style="left:${pct(107.2)}%">2025/12/29/一</span>`);

        // ---------- 盘口 ----------
        const tone = { r: "text-[#ff5c5c]", g: "text-[#3ee468]", w: "text-[#d0d0d0]", c: "text-[#00ffff]", y: "text-[#ffff99]" };
        const num = s => s.replace(/[万亿]/g, '<span class="font-normal">$&</span>');
        const level = ([n, p, q, d]) => `<tr class="h-[15px]"><th class="w-9 text-left font-normal">${n}</th><td class="w-[65px] text-right font-bold text-[#ff5c5c]">${p}</td><td class="text-right font-bold text-[#d0d0d0]">${q}</td><td class="w-[39px] text-right text-[13px] ${d[0] === "+" ? tone.r : tone.g}">${d}</td></tr>`;
        $("asks").innerHTML = [["卖五", "7.94", "1636", "+100"], ["卖四", "7.93", "1609", "-44"], ["卖三", "7.92", "2161", "+5"], ["卖二", "7.91", "2614", "+59"], ["卖一", "7.90", "894", "+16"]].map(level).join("");
        $("bids").innerHTML = [["买一", "7.89", "448", "-108"], ["买二", "7.88", "554", "-4"], ["买三", "7.87", "457", ""], ["买四", "7.86", "423", "+205"], ["买五", "7.85", "674", "-10"]].map(level).join("");

        const ttm = '<sup class="text-[8px]">TTM</sup>';
        const latin = t => `<span class="font-['Noto_Sans_CJK_SC',sans-serif]">${t}</span>`;
        $("quote").innerHTML = [
            ["最新", "7.90", "r", "均价", "7.79", "r"], ["涨幅", "+1.94%", "r", "涨跌", "▲0.15", "r"], ["总手", "34.60万", "w", "金额", "2.69亿", "c"],
            ["换手*", "6.69%", "w", "量比", "4.47", "r"], ["最高", "7.96", "r", "最低", "7.55", "g"], ["今开", "7.60", "g", "昨收", "7.75", "w"],
            ["涨停", "9.30", "r", "跌停", "6.20", "g"], ["外盘", "20.24万", "r", "内盘", "14.36万", "g"], ["盘后量", "—", "w", "盘后额", "—", "c"],
            ["净资产", "3.99", "w", "ROE", "1.78%", "w"], ["收益㈢", "0.067", "w", "PE(动)*", "88.41", "w"], ["股息" + ttm, "0.06", "w", "股息率" + ttm, "0.71%", "w"],
            ["总股本", "6.434亿", "w", "总值", "50.83亿", "w"], ["流通股", "5.174亿", "w", "流值", "40.87亿", "w"]
        ].map(([a, b, c, d, e, f]) => `<tr class="h-[18px]"><th class="w-[45px] text-left font-normal">${latin(a)}</th><td class="w-[57px] text-right font-bold ${tone[c]}">${num(b)}</td><th class="w-[55px] pl-[7px] text-left font-normal">${latin(d)}</th><td class="text-right font-bold ${tone[f]}">${num(e)}</td></tr>`).join("");

        $("ticks").innerHTML = [
            ["09:52", "7.92", -1, "805", "g", 64], [":12", "7.94", 1, "726", "r", 43], [":15", "7.92", -1, "909", "g", 34], [":18", "7.92", 0, "1169", "g", 37], [":21", "7.93", 1, "244", "r", 25],
            [":24", "7.92", -1, "634", "g", 20], [":27", "7.91", -1, "674", "g", 27], [":30", "7.92", 1, "395", "r", 23], [":33", "7.91", -1, "312", "g", 25], [":36", "7.90", -1, "1029", "g", 37],
            [":39", "7.90", 0, "354", "g", 12], [":42", "7.90", 0, "339", "g", 14], [":45", "7.90", 0, "698", "g", 44], [":48", "7.90", 0, "305", "g", 24], [":51", "7.89", -1, "127", "g", 10],
            [":54", "7.90", 1, "671", "r", 24], [":57", "7.89", -1, "492", "g", 17], ["09:53", "7.90", 1, "168", "r", 11]
        ].map(([t, p, d, q, c, n], i) => `<div class="flex min-h-0 flex-1 items-center pr-2 font-bold ${i === 17 ? "border-t border-dashed border-[#444]" : ""}">
            <span class="w-10 text-right ${t.length > 3 ? "text-[#a8a8a8]" : "text-[13px] font-normal"}">${t}</span>
            <span class="w-[61px] text-right text-[#ff5c5c]">${p}</span>
            <span class="flex w-[13px] justify-center">${d ? `<svg class="h-[15px] w-[7px]" viewBox="0 0 7 15" fill="${d > 0 ? "#ff5c5c" : "#3ee468"}"><path d="${d > 0 ? "M3.500 0L7 4H5v11H2V4H0z" : "M3.500 15L0 11h2V0h3v11h2z"}"/></svg>` : ""}</span>
            <span class="w-[58px] text-right ${tone[c]}">${q}</span><span class="flex-1 text-right text-[#d0d0d0]">${n}</span></div>`).join("");

        // ---------- 基本 ----------
        $("basics").innerHTML = [
            ["收益㈢", "0.067", "PE(动)", "88.41"], ["净资产", "3.99", "市净率", "1.98"], ["总收入", "9.47亿", "同比", "-2.75%"], ["净利润", "4312万", "同比", "-41.09%"],
            ["毛利率", "28.09%", "净利率", "5.22%"], ["ROE", "1.78%", "负债率", "64.75%"], ["总股本", "6.434亿", "总值", "50.83亿"], ["流通股", "5.174亿", "流值", "40.87亿"]
        ].map(([a, b, c, d]) => `<tr class="h-[15px]"><th class="w-[45px] text-left font-normal">${latin(a)}</th><td class="w-[57px] text-right font-bold text-[#d0d0d0]">${num(b)}</td><th class="w-12 pl-[3px] text-left font-normal">${latin(c)}</th><td class="text-right font-bold text-[#d0d0d0]">${num(d)}</td></tr>`).join("");

        $("holders").innerHTML = [["股东情况", "25-09-30", "25-06-30"], ["股东户数", "4.55万", "5.24万"], ["人均流通股", "1.11万", "9280"]].map(([a, b, c]) =>
            `<tr class="h-5"><th class="w-[70px] text-left font-normal whitespace-nowrap">${a}</th><td class="w-[66px] text-right font-bold text-[#d0d0d0]">${num(b)}</td><td class="text-right font-bold text-[#d0d0d0]">${num(c)}</td></tr>`).join("");
        $("forecast").innerHTML = [["2027", "0.27", "29.74"], ["2026", "0.22", "36.40"], ["2025", "0.14", "57.32"]].map(([a, b, c]) =>
            `<tr class="h-[18px]"><td class="pl-[3px]">${a}</td><td class="text-right">${b}</td><td class="pr-1 text-right">${c}</td></tr>`).join("");
        const none = ["— —", "— —", "— —"];
        $("ratings").innerHTML = [["25/11/16", "买入", "华金证券"], ["25/10/30", "推荐", "中国银河"], ["25/09/14", "买入", "太平洋"], ["24/08/30", "推荐", "中国银河"], ["23/06/06", "推荐", "中国银河"], ["17/01/16", "买入", "太平洋"],
            ["16/10/31", "买入", "粤开证券"], ["16/09/30", "推荐", "东兴证券"], ["16/06/14", "增持", "太平洋"], ["16/05/17", "增持", "太平洋"], ["16/05/12", "买入", "国金证券"], none, none, none, none, none].map(([a, b, c]) =>
            `<tr class="h-[23px]"><td class="pl-[3px] ${a === "— —" ? "" : "font-bold"}">${a}</td><td class="text-right">${b}</td><td class="pr-1 text-right">${c}</td></tr>`).join("");

        // 利润趋势
        let p = '<g shape-rendering="crispEdges" fill="none" stroke="#555"><rect x="1722.500" y="250.500" width="190" height="60"/><path d="M1722 280.500h190"/><path stroke="#3c3c3c" stroke-dasharray="3 3" d="M1722 265.500h190M1722 295.500h190M1753.500 251v60M1784.500 251v60M1815.500 251v60M1846.500 251v60M1877.500 251v60"/></g>';
        p += '<g shape-rendering="crispEdges">' + [1744, 1754, 1764, 1774, 1800, 1856, 1866, 1876].map(x => `<rect x="${x}" y="279" width="5" height="1" fill="#ff5c5c"/>`).join("") +
            '<rect x="1810" y="278" width="5" height="2" fill="#ff5c5c"/><rect x="1820" y="280" width="5" height="1" fill="#3ee468"/><rect x="1830" y="280" width="5" height="23" fill="#3ee468"/></g>';
        p += [["8", 256], ["4", 268], ["0", 280], ["-4", 292], ["-8", 304]].map(([t, y]) => `<text x="1719" y="${y + 4}" text-anchor="end" fill="#c4c4c4">${t}</text>`).join("");
        p += [["2023", 1760], ["2024", 1816], ["2025", 1872]].map(([t, x]) => `<text x="${x}" y="323" text-anchor="middle" fill="#c4c4c4" font-size="11">${t}</text>`).join("");
        $("profit").innerHTML = p;

        // ---------- 异动 ----------
        $("alerts").innerHTML = [["汉朔科技", "大笔卖出", "351手", "g"], ["火炬电子", "大幅下跌", "-6.84%", "g"], ["中信重工", "大幅下跌", "-6.16%", "g"], ["金牛化工", "大笔买入", "7290手", "r"], ["泰山石油", "大笔卖出", "12720手", "g"], ["*ST华闻", "笼子触跌停", "2.85元", "g"],
            ["中国瑞林", "大笔卖出", "654手", "g"], ["信凯科技", "大笔卖出", "264手", "g"], ["红墙股份", "大笔卖出", "1901手", "g"], ["辉隆股份", "有大买盘", "14323手", "y"], ["王府井", "60日新低", "13.01元", "g", "c"], ["通宇通讯", "大笔卖出", "3607手", "g"]].map(([a, b, c, t, t2], i) =>
            `<tr class="h-5 ${tone[t]} ${i === 11 ? "bg-[#2a2a2a]" : ""}"><td class="w-[55px] pl-[5px]">09:53</td><td class="w-24 ${t2 ? tone[t2] : ""}">${a}</td><td class="w-[84px]">${b}</td><td class="text-right">${c}</td></tr>`).join("");

        // ---------- 题材 ----------
        const tag = t => `<span class="mr-[7px] rounded-xs border border-[#ea5504] px-px text-[13px] text-[#ea5504]">${t}</span>`;
        const head = t => `<strong class="mr-3.5 font-medium text-white">${t}</strong>`;
        const half = t => t.replace(/[\x20-\x7e]+/g, '<span class="[font-feature-settings:\'hwid\']">$&</span>');
        $("info").innerHTML = [
            head("所属板块") + `<span class="text-[#ffff99]">公用事业${tag("一级")}电力${tag("二级")}电能综合服务${tag("三级")}黑龙江${tag("地区")}${half("富时罗素 创业板综 生物质能发电 绿色电力 储能概念 碳交易 华为概念 充电桩 风能 光伏概念 智能电网 节能环保")}</span>`,
            head("经营范围") + "电力电子产品、高压变频器、高低压电气设备、箱式变电站、整流装置、直流电源成套装置、封闭母线、电气元件、继电保护产品、阀控密封铅酸蓄电池产品、汽车充电成套",
            half("产、销售和信息与技术咨询服务,计算机技术、计算机软件技术开发及应用,新能源汽车充电运营服务,汽车租赁服务,新能源汽车销售,节能环保工程设备技术开发、技术服务,实业投资,从"),
            half("地、设备租赁,招标代理服务,新能源发电设计与施工:以自有资金从事投资活动:风力、光伏、生物质电站设计、施工及运营。"),
            head("主营业务") + "我国智能配电网行业发展趋势良好，头部企业凭借技术、规模与服务优势主导市场，中小企业通过细分领域创新或区域深耕寻求突破，同时国际品牌与本土企业的竞争与合作",
            "的发展，智能配电网设备需求呈现出快速变化的趋势。新的应用场景、业务模式和技术创新不断涌现，对公司的产品和服务提出了更高的要求。",
            head("行业背景") + half("（一）智能配电网业务“双碳”目标深化。根据国家能源局数据显示，2024年中国可再生能源装机容量预计突破14亿千瓦，风电、光伏新增装机超1.6亿千瓦，推动输配电设"),
            half("家电网计划投资超6200亿元，重点投向特高压、配网智能化及抽水蓄能领域，其中“五交五直”特高压项目设备招标规模同比增长25%，带动智能开关柜、配电自动化设备需求激增。（工"),
            "着全球能源转型趋势及中国风电、光伏产业发展，风电、光伏度电成本的持续下行已成为不可逆的产业规律。技术进步带来的效率跃升与制造工艺革新是成本下探的根本动力，规模化生产与市场化竞争形成的正向循环构成持续降本",
            "的基础框架。而全球能源结构转型的政策红利则为成本压缩提供了战略支撑。（二）综合能源服务《“十四五”可再生能源发展规划》提出分散式风电与集中式开发协同推进，要求中东南部地区因地制宜布局项目。国家能源局首次"
        ].map(l => `<p class="h-5">${l}</p>`).join("");
    </script>
</body>
</html>
